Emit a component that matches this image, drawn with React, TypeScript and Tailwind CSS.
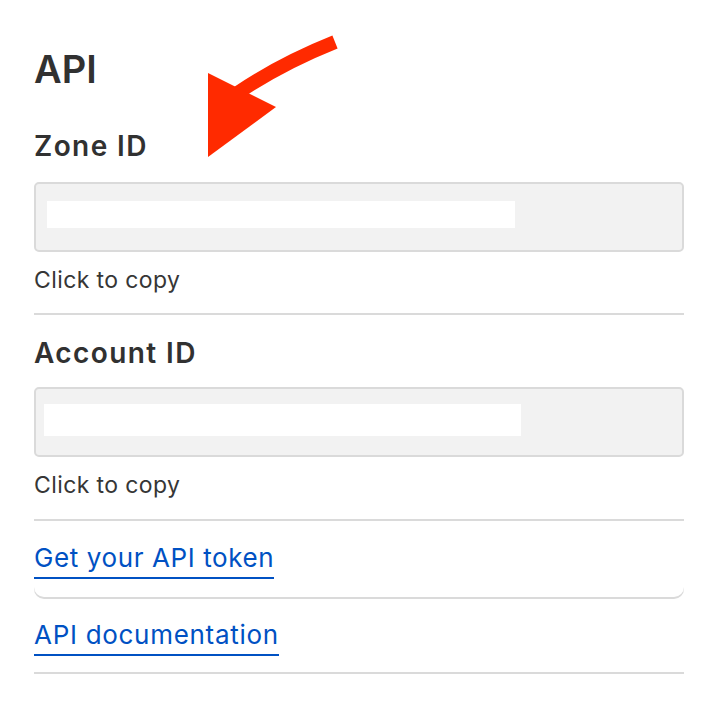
import React from "react";

const font = { fontFamily: "Inter, 'Noto Sans', sans-serif" };

const CopyField = ({ label, bar }: { label: string; bar: string }) => (
  <div>
    <div className="h-[70px] rounded-[5px] border-2 border-[#dadada] bg-[#f2f2f2]">
      <div className={bar} />
    </div>
    <p className="mt-[14px] text-[23px] leading-[28px] tracking-[0.4px] text-[#363636]">{label}</p>
  </div>
);

export default function App() {
  return (
    <div className="relative min-h-[702px] w-[714px] bg-white text-[#313131]" style={font}>
      <div className="px-[34px] pt-[46px] pr-[30px]">
        <h1 className="text-[38px] leading-[46px] font-semibold">API</h1>

        <h2 className="mt-[38px] text-[28px] leading-[32px] font-semibold tracking-[1.4px]">Zone ID</h2>
        <div className="mt-[20px]">
          <CopyField label="Click to copy" bar="ml-[11px] mt-[17px] h-[27px] w-[468px] bg-white" />
        </div>
        <div className="mt-[19px] h-[2px] bg-[#dadada]" />

        <h2 className="mt-[22px] text-[28px] leading-[32px] font-semibold tracking-[1.4px]">Account ID</h2>
        <div className="mt-[18px]">
          <CopyField label="Click to copy" bar="ml-[8px] mt-[15px] h-[32px] w-[477px] bg-white" />
        </div>
        <div className="mt-[20px] h-[2px] bg-[#dadada]" />

        <div className="rounded-b-[10px] pt-[21px] pb-[18px] shadow-[0_2px_0_0_#dadada]">
          <a href="#" className="inline-block border-b-2 border-[#0051c3] pb-[3px] text-[26px] leading-[32px] tracking-[0.6px] text-[#0051c3]">
            Get your API token
          </a>
        </div>

        <div className="pt-[22px]">
          <a href="#" className="inline-block border-b-2 border-[#0051c3] pb-[3px] text-[26px] leading-[32px] tracking-[0.7px] text-[#0051c3]">
            API documentation
          </a>
        </div>
        <div className="mt-[16px] h-[2px] bg-[#dadada]" />
      </div>

      <svg className="pointer-events-none absolute left-0 top-0" width="714" height="702" viewBox="0 0 714 702">
        <path d="M335 42 Q280 64 236 94" stroke="#ff2a00" strokeWidth="14" fill="none" />
        <polygon points="208,73 276,107 208,157" fill="#ff2a00" />
      </svg>
    </div>
  );
}
